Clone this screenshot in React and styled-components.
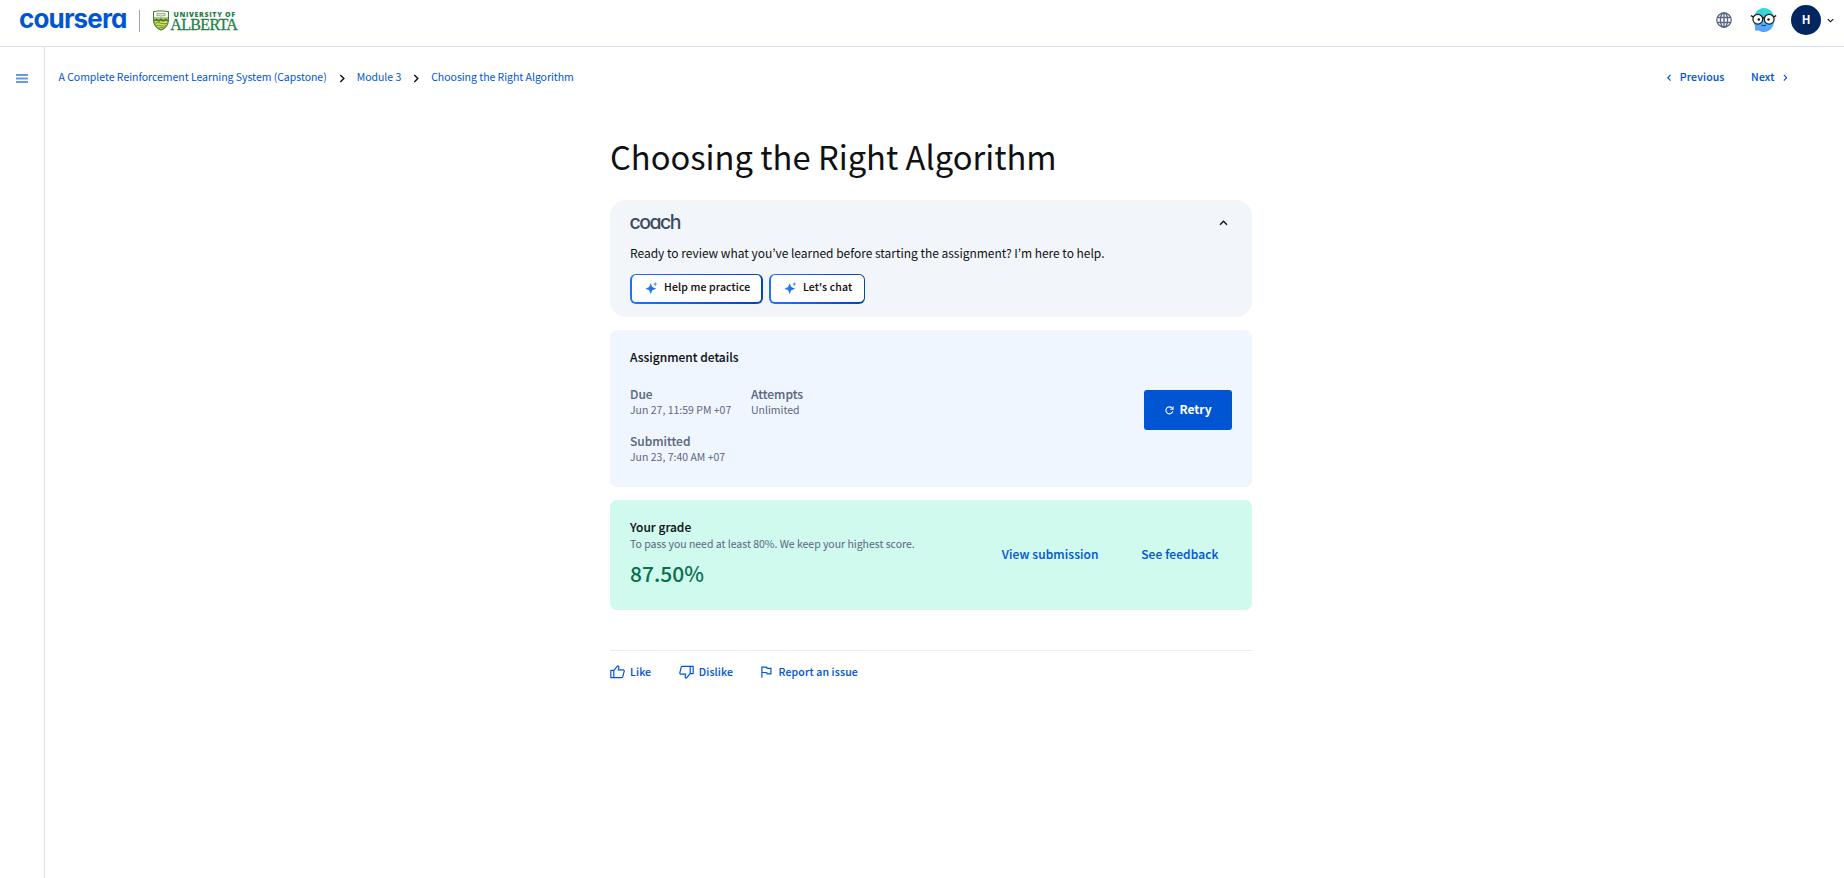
import React from "react";
import styled, { createGlobalStyle, css } from "styled-components";

const sans = `"Noto Sans CJK KR", "Open Sans", sans-serif`;

const semibold = css`
  font-weight: 500;
  -webkit-text-stroke: 0.1px currentColor;
`;

const GlobalStyle = createGlobalStyle`
  * { box-sizing: border-box; }
  body {
    margin: 0;
    background: #fff;
    color: #0f1114;
    font-family: ${sans};
    overflow: hidden;
  }
  svg { display: block; flex: none; }
`;

const Page = styled.div`
  display: flex;
  flex-direction: column;
  height: 100vh;
`;

const Header = styled.header`
  display: flex;
  justify-content: space-between;
  align-items: flex-start;
  height: 47px;
  border-bottom: 1px solid #dae1ed;
`;

const Brand = styled.div`
  display: flex;
  align-items: center;
  height: 41px;
  padding-left: 19px;
`;

const Wordmark = styled.span`
  width: 107px;
  font: 700 26px/30px Inter, sans-serif;
  font-feature-settings: "cv11";
  letter-spacing: -0.85px;
  color: #0056d2;
  white-space: nowrap;
  margin-top: -4px;
`;

const BrandDivider = styled.div`
  width: 1px;
  height: 22px;
  margin: 0 13px;
  background: #9aa6b8;
`;

const Account = styled.div`
  display: flex;
  align-items: center;
  height: 40px;
  padding-right: 10px;
`;

const Mascot = styled.div`
  margin: 0 14px 0 18px;
`;

const Avatar = styled.div`
  width: 30px;
  height: 30px;
  border-radius: 50%;
  background: #002761;
  color: #fff;
  text-align: center;
  font-size: 11.5px;
  font-weight: 700;
  line-height: 29px;
  margin-right: 6px;
`;

const Body = styled.div`
  display: flex;
  flex: 1;
`;

const Sidebar = styled.aside`
  width: 45px;
  border-right: 1px solid #dae1ed;
  padding: 27px 0 0 16px;
`;

const Main = styled.main`
  flex: 1;
`;

const TopBar = styled.nav`
  display: flex;
  justify-content: space-between;
  height: 60px;
  padding: 0 57px 0 13.5px;
`;

const Crumbs = styled.div`
  display: flex;
  align-items: center;
  gap: 12px;
  svg { margin-top: 2px; }
`;

const Crumb = styled.a`
  color: #0056d2;
  font-size: 10.5px;
  line-height: 18px;
  letter-spacing: -0.03px;
  white-space: nowrap;
`;

const Pager = styled.div`
  display: flex;
  align-items: center;
  gap: 26.5px;
`;

const PagerLink = styled.a`
  display: flex;
  align-items: center;
  gap: 8px;
  color: #0056d2;
  font-size: 10.5px;
  letter-spacing: 0.13px;
  line-height: 18px;
  ${semibold}
  svg { margin-top: 2px; }
`;

const Column = styled.div`
  width: 642px;
  margin-left: 565px;
`;

const Title = styled.h1`
  margin: 0;
  padding-top: 25px;
  height: 93px;
  font-size: 32.7px;
  line-height: 48px;
  font-weight: 400;
  white-space: nowrap;
`;

const Card = styled.section`
  height: ${(p) => p.$height}px;
  margin-bottom: 13.33px;
  padding: 0 20px;
  border-radius: ${(p) => p.$radius}px;
  background: ${(p) => p.$bg};
`;

const CoachHead = styled.div`
  display: flex;
  justify-content: space-between;
  align-items: center;
  height: 45px;
  padding-right: 4px;
`;

const CoachName = styled.span`
  font: 500 19.5px/24px Inter, sans-serif;
  font-feature-settings: "cv11";
  letter-spacing: -1.5px;
  color: #3d4a5f;
  margin: -1px 0 0 -0.5px;
`;

const CoachText = styled.p`
  margin: -1px 0 0;
  font-size: 12px;
  letter-spacing: -0.02px;
  line-height: 18px;
  white-space: nowrap;
`;

const CoachActions = styled.div`
  display: flex;
  gap: 6px;
  padding-top: 12px;
`;

const CoachButton = styled.button`
  display: flex;
  align-items: center;
  gap: 6px;
  width: ${(p) => p.$width}px;
  height: 30px;
  padding: 0 0 0 13px;
  border: 2px solid transparent;
  border-width: 1px ${(p) => p.$edge}px 2px 2px;
  border-radius: 6px;
  background:
    linear-gradient(#fff, #fff) padding-box,
    linear-gradient(90deg, #1f75f5, #0048b0) border-box;
  font-family: ${sans};
  font-size: 10.5px;
  letter-spacing: 0.13px;
  line-height: 18px;
  ${semibold}
  color: #0f1114;
  white-space: nowrap;
  span { margin-top: -3px; }
  svg { margin-top: -1px; }
`;

const CardTitle = styled.h2`
  margin: 0;
  padding-top: 18.5px;
  font-size: 12px;
  line-height: 18px;
  ${semibold}
`;

const DetailsRow = styled.div`
  display: flex;
  justify-content: space-between;
  align-items: flex-start;
`;

const Facts = styled.dl`
  display: grid;
  grid-template-columns: 101px auto;
  column-gap: 20px;
  row-gap: 14px;
  margin: 19px 0 0;
`;

const Fact = styled.div`
  color: #5b6780;
  white-space: nowrap;
  dt {
    font-size: 12px;
    line-height: 17px;
    ${semibold}
  }
  dd {
    margin: 0;
    font-size: 10.5px;
    line-height: 16px;
  }
`;

const RetryButton = styled.button`
  display: flex;
  align-items: center;
  justify-content: center;
  gap: 5px;
  width: 88px;
  height: 40px;
  margin-top: 23.5px;
  padding: 0 0 1px 1px;
  border: 0;
  border-radius: 3px;
  background: #0056d2;
  color: #fff;
  font: 700 12px/20px ${sans};
  svg { margin-top: 2px; }
`;

const GradeRow = styled.div`
  display: flex;
  justify-content: space-between;
  height: 110px;
`;

const Hint = styled.p`
  margin: 0;
  color: #5b6780;
  font-size: 10.5px;
  letter-spacing: -0.02px;
  line-height: 16px;
  white-space: nowrap;
`;

const Score = styled.div`
  margin-top: 3.5px;
  color: #087051;
  font-size: 21px;
  line-height: 34px;
  font-weight: 500;
`;

const GradeLinks = styled.div`
  display: flex;
  align-items: center;
  gap: 42.5px;
  padding: 0 13.5px 2px 0;
`;

const GradeLink = styled.a`
  color: #0056d2;
  font-size: 12px;
  letter-spacing: 0.1px;
  line-height: 18px;
  ${semibold}
  white-space: nowrap;
`;

const Feedback = styled.div`
  display: flex;
  gap: 27.5px;
  margin-top: 40px;
  padding-top: 12px;
  border-top: 1px solid #e3ecfa;
`;

const FeedbackLink = styled.a`
  display: flex;
  align-items: center;
  gap: ${(p) => p.$gap || 5}px;
  color: #0056d2;
  font-size: 10.5px;
  letter-spacing: 0.15px;
  line-height: 18px;
  ${semibold}
  white-space: nowrap;
`;

const Chevron = ({ dir, color, w = 6, h = 9, weight = 1.3 }) => {
  const d = {
    right: "M1 .9 4.1 4 1 7.1",
    left: "M4 .9 .9 4 4 7.1",
    up: "M.9 4.1 4 1l3.1 3.1",
    down: "M.9.9 4 4 7.1.9",
  }[dir];
  const flat = dir === "up" || dir === "down";
  return (
    <svg width={w} height={h} viewBox={flat ? "0 0 8 5" : "0 0 5 8"} fill="none">
      <path d={d} stroke={color} strokeWidth={weight} />
    </svg>
  );
};

const AlbertaLogo = () => (
  <svg width="86" height="22" viewBox="0 0 86 22">
    <path d="M.6 1.7Q4 .7 8 1.1q4-.4 7.4.6v8.6c0 5-3.4 8-7.4 9.8C4 18.3.6 15.3.6 10.3Z" fill="#ecd84a" stroke="#2b7a45" strokeWidth="1.1" />
    <path d="M1.2 2.1Q8 .7 14.8 2.1V7.5H1.2Z" fill="#fff" />
    <path d="M4 3.5q2.1-.6 4 .3 1.9-.9 4-.3v2.3q-2.1-.5-4 .4-1.9-.9-4-.4Z" fill="#f5efc4" stroke="#4d7a5c" strokeWidth=".6" />
    <path d="M1 7.9h14M1.2 10l2.3-1.2 2.3 1.3L8 8.6l2.3 1.5 2.3-1.3 2.3 1.2v1.1l-2.3-.7-2.3 1L8 10.4l-2.2 1-2.3-1-2.3.7Z" fill="#2b7a45" stroke="#2b7a45" strokeWidth=".5" />
    <path d="M1.6 13.2q3.2-1.2 6.4 0t6.4 0M2.8 15.7q2.6-1 5.2 0t5.2 0M5.2 18q2.8-.9 5.6 0" fill="none" stroke="#5c9a3c" strokeWidth="1" />
    <text x="20.5" y="7" textLength="61.5" fontFamily="Open Sans, sans-serif" fontWeight="800" fontSize="7" fill="#1f8048">UNIVERSITY OF</text>
    <text x="17.3" y="19.5" textLength="67.5" fontFamily="Liberation Serif, serif" fontWeight="400" fontSize="16" fill="#1f8048" stroke="#1f8048" strokeWidth=".3">ALBERTA</text>
  </svg>
);

const Globe = () => (
  <svg width="16" height="16" viewBox="0 0 16 16" fill="none" stroke="#5b6780" strokeWidth="1.35">
    <circle cx="8" cy="8" r="7.2" />
    <ellipse cx="8" cy="8" rx="3.6" ry="7.2" />
    <path d="M8 .8v14.4M1.3 5.5h13.4M1.3 10.5h13.4" />
  </svg>
);

const MascotIcon = () => (
  <svg width="27" height="26" viewBox="0 0 27 26">
    <defs>
      <linearGradient id="mascot" x1="0.6" y1="0" x2="0.4" y2="1">
        <stop offset="0" stopColor="#2fe0cf" />
        <stop offset=".5" stopColor="#4bbdf3" />
        <stop offset="1" stopColor="#5b9bff" />
      </linearGradient>
    </defs>
    <path d="M14 1c6 0 10.300 5 10.300 12S20 25 14 25c-2.500 0-4-.7-5.300-1.500H5V19c-.9-1.500-1.300-3.500-1.300-6C3.700 6 8 1 14 1Z" fill="url(#mascot)" />
    <circle cx="7.8" cy="12.2" r="4.9" fill="#fff" stroke="#1c1c1c" strokeWidth="1.2" />
    <circle cx="19.2" cy="12.2" r="4.9" fill="#fff" stroke="#1c1c1c" strokeWidth="1.2" />
    <path d="M12.6 11q.9-.8 1.8 0M.8 8.700 3.400 9.800M26.200 8.700 23.600 9.800" stroke="#1c1c1c" strokeWidth="1.3" fill="none" />
    <circle cx="8.8" cy="12.5" r="1.2" fill="#111" />
    <circle cx="18.5" cy="12.5" r="1.2" fill="#111" />
    <path d="M11.500 17.800q2.300 2 4.600 0" stroke="#14305c" strokeWidth="1.1" fill="none" />
  </svg>
);

const MenuIcon = () => (
  <svg width="12" height="9" viewBox="0 0 12 9" stroke="#6699e4" strokeWidth="1.8">
    <path d="M0 1h12M0 4.500h12M0 8h12" />
  </svg>
);

const Sparkle = () => (
  <svg width="13" height="12" viewBox="0 0 13 12">
    <defs>
      <linearGradient id="spark" x1="0" y1="0" x2="1" y2="0">
        <stop offset="0" stopColor="#3587ff" />
        <stop offset="1" stopColor="#0f62e0" />
      </linearGradient>
    </defs>
    <path d="M5.700 1.300 7.200 5l3.900 1.700-3.900 1.600-1.500 3.700-1.600-3.700L.3 6.700 4.100 5Z" fill="url(#spark)" />
    <path d="m10.300 0 .6 1.500 1.600.6-1.600.6-.6 1.500-.6-1.500-1.600-.6 1.600-.6Z" fill="#3b92f5" />
  </svg>
);

const RefreshIcon = () => (
  <svg width="9" height="9" viewBox="0 0 9 9" fill="none" stroke="#fff" strokeWidth="1.1">
    <path d="M7.800 5.200A3.500 3.500 0 1 1 7 2l.9 1M8.100.4v2.900H5.200" />
  </svg>
);

const ThumbIcon = ({ down }) => (
  <svg width="15" height="14" viewBox="0 0 15 14" fill="none" stroke="#0056d2" strokeWidth="1.2" strokeLinejoin="round">
    <g transform={down ? "rotate(180 7.5 7)" : undefined}>
      <path d="M.8 5.400h3v7.200h-3ZM3.800 5.400 7.700.8q1.300.2 1.200 1.500L8.300 4.900h4.900q1.200.2 1 1.300L12.800 11.600q-.3 1-1.300 1H3.800" />
    </g>
  </svg>
);

const FlagIcon = () => (
  <svg width="11" height="12" viewBox="0 0 11 12" fill="none" stroke="#0056d2" strokeWidth="1.2">
    <path d="M.9 11.700V1.100h4.700l.5 1.300h3.800v5.400H6.200l-.5-1.300H.9" />
  </svg>
);

export default function App() {
  return (
    <Page>
      <GlobalStyle />
      <Header>
        <Brand>
          <Wordmark>coursera</Wordmark>
          <BrandDivider />
          <AlbertaLogo />
        </Brand>
        <Account>
          <Globe />
          <Mascot>
            <MascotIcon />
          </Mascot>
          <Avatar>H</Avatar>
          <Chevron dir="down" color="#0f1114" w={7} h={5} />
        </Account>
      </Header>
      <Body>
        <Sidebar>
          <MenuIcon />
        </Sidebar>
        <Main>
          <TopBar>
            <Crumbs>
              <Crumb>A Complete Reinforcement Learning System (Capstone)</Crumb>
              <Chevron dir="right" color="#0f1114" />
              <Crumb>Module 3</Crumb>
              <Chevron dir="right" color="#0f1114" />
              <Crumb>Choosing the Right Algorithm</Crumb>
            </Crumbs>
            <Pager>
              <PagerLink>
                <Chevron dir="left" color="#0056d2" w={4.5} h={7.5} />
                Previous
              </PagerLink>
              <PagerLink>
                Next
                <Chevron dir="right" color="#0056d2" w={4.5} h={7.5} />
              </PagerLink>
            </Pager>
          </TopBar>
          <Column>
            <Title>Choosing the Right Algorithm</Title>
            <Card $height={116.67} $radius={16} $bg="#f2f5fa">
              <CoachHead>
                <CoachName>coach</CoachName>
                <Chevron dir="up" color="#0f1114" w={9} h={6} weight={1.2} />
              </CoachHead>
              <CoachText>
                Ready to review what you’ve learned before starting the assignment? I’m here to help.
              </CoachText>
              <CoachActions>
                <CoachButton $width={133} $edge={2}>
                  <Sparkle />
                  <span>Help me practice</span>
                </CoachButton>
                <CoachButton $width={96} $edge={1}>
                  <Sparkle />
                  <span>Let's chat</span>
                </CoachButton>
              </CoachActions>
            </Card>
            <Card $height={156.67} $radius={7} $bg="#eff6ff">
              <CardTitle>Assignment details</CardTitle>
              <DetailsRow>
                <Facts>
                  <Fact>
                    <dt>Due</dt>
                    <dd>Jun 27, 11:59 PM +07</dd>
                  </Fact>
                  <Fact>
                    <dt>Attempts</dt>
                    <dd>Unlimited</dd>
                  </Fact>
                  <Fact>
                    <dt>Submitted</dt>
                    <dd>Jun 23, 7:40 AM +07</dd>
                  </Fact>
                </Facts>
                <RetryButton>
                  <RefreshIcon />
                  Retry
                </RetryButton>
              </DetailsRow>
            </Card>
            <Card $height={110} $radius={7} $bg="#cffaed">
              <GradeRow>
                <div>
                  <CardTitle>Your grade</CardTitle>
                  <Hint>To pass you need at least 80%. We keep your highest score.</Hint>
                  <Score>87.50%</Score>
                </div>
                <GradeLinks>
                  <GradeLink>View submission</GradeLink>
                  <GradeLink>See feedback</GradeLink>
                </GradeLinks>
              </GradeRow>
            </Card>
            <Feedback>
              <FeedbackLink>
                <ThumbIcon />
                Like
              </FeedbackLink>
              <FeedbackLink>
                <ThumbIcon down />
                Dislike
              </FeedbackLink>
              <FeedbackLink $gap={7}>
                <FlagIcon />
                Report an issue
              </FeedbackLink>
            </Feedback>
          </Column>
        </Main>
      </Body>
    </Page>
  );
}
